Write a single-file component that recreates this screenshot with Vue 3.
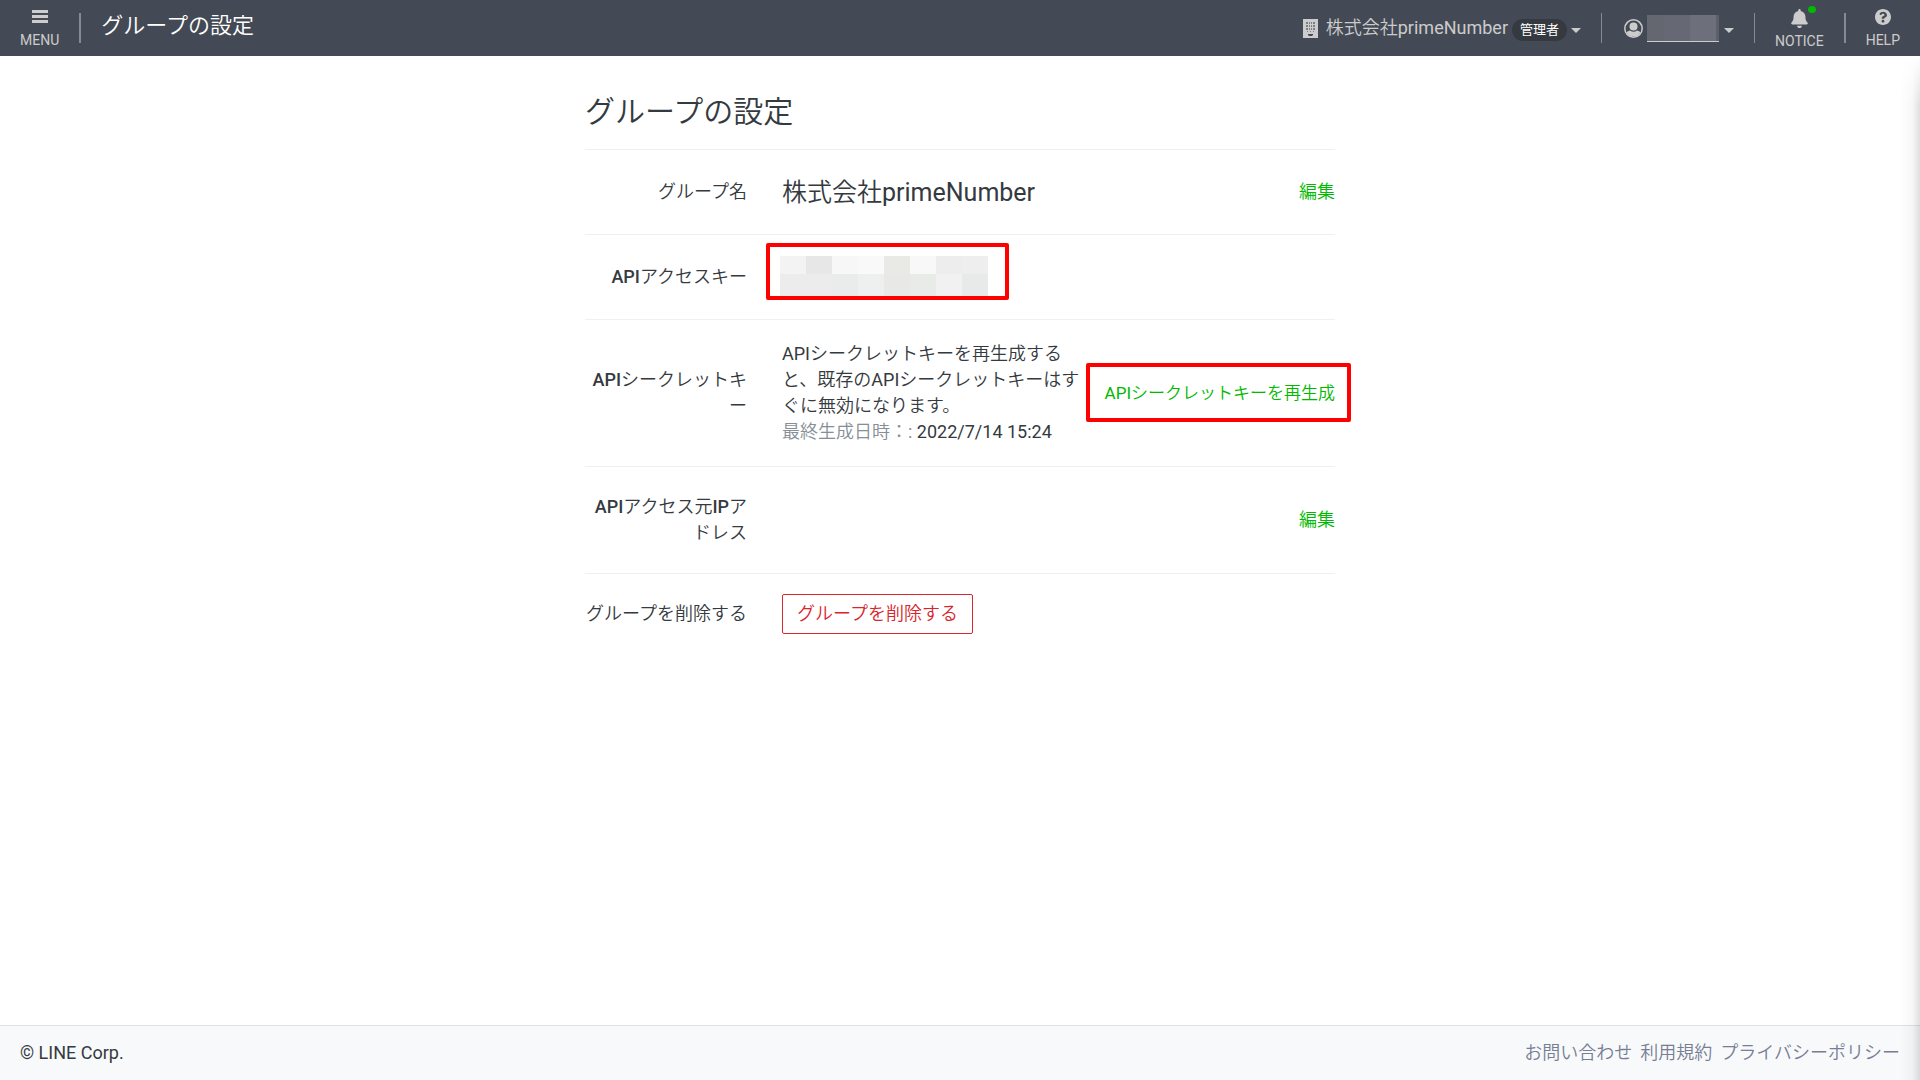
<script setup>
const keyTiles = [
  '#f3f3f3', '#e7e7e7', '#f7f7f7', '#f9f9f9', '#e9e9e6', '#f8f8f8', '#ededed', '#eeeeee',
  '#ececec', '#ebeceb', '#eaeceb', '#eeefef', '#e8e8e6', '#e9ebe9', '#f1f1f1', '#e8eae9',
]
const footerLinks = ['お問い合わせ', '利用規約', 'プライバシーポリシー']
</script>

<template>
  <div class="page" lang="ja">
    <header class="topbar">
      <button type="button" class="stack">
        <svg class="stack-icon" viewBox="0 0 16 16" width="16" height="16" aria-hidden="true">
          <path d="M0 1h16v3H0zM0 6h16v3H0zM0 11h16v3H0z" fill="currentColor" />
        </svg>
        <span>MENU</span>
      </button>
      <span class="divider thick"></span>
      <span class="app-title">グループの設定</span>

      <nav class="tools">
        <button type="button" class="picker">
          <svg class="building" viewBox="0 0 15 19" width="15" height="19" aria-hidden="true">
            <path d="M0 0h15v19H0z" fill="currentColor" />
            <path d="M3 3h2v2H3zM6 3h1v2H6zM8 3h1v2H8zM10 3h2v2h-2zM3 6h2v2H3zM6 6h1v2H6zM8 6h1v2H8zM10 6h2v2h-2zM3 9h2v2H3zM6 9h1v2H6zM8 9h1v2H8zM10 9h2v2h-2zM4 12h1v1H4zM7 12h1v1H7zM10 12h1v1h-1z" fill="#444a55" opacity="0.6" />
            <path d="M5 15h5v1l-1 1H6l-1-1z" fill="#444a55" />
          </svg>
          <span class="company">株式会社primeNumber</span>
          <span class="role">管理者</span>
          <span class="caret"></span>
        </button>
        <span class="divider"></span>
        <button type="button" class="picker account" aria-label="アカウント">
          <svg viewBox="0 0 19 19" width="19" height="19" aria-hidden="true">
            <defs>
              <clipPath id="avatar-ring"><circle cx="9.5" cy="9.5" r="8" /></clipPath>
            </defs>
            <circle cx="9.5" cy="9.5" r="8.7" fill="none" stroke="currentColor" stroke-width="1.5" />
            <g clip-path="url(#avatar-ring)" fill="currentColor">
              <circle cx="9.5" cy="7.5" r="4" />
              <path d="M1 19v-4c1-2 3-3 5-3.500c2 1.600 5 1.600 7 0c2 .5 4 1.500 5 3.500v4z" />
            </g>
          </svg>
          <span class="masked-name"></span>
          <span class="caret"></span>
        </button>
        <span class="divider"></span>
        <button type="button" class="stack notice">
          <svg class="stack-icon bell" viewBox="0 0 448 512" width="17" height="19" aria-hidden="true">
            <path fill="currentColor" d="M224 512c35.32 0 63.97-28.65 63.97-64H160.03c0 35.35 28.65 64 63.97 64zm215.39-149.71c-19.32-20.76-55.47-51.99-55.47-154.29 0-77.7-54.48-139.9-127.94-155.16V32c0-17.67-14.32-32-31.98-32s-31.98 14.33-31.98 32v20.84C118.56 68.1 64.08 130.3 64.08 208c0 102.3-36.15 133.53-55.47 154.29-6 6.45-8.66 14.16-8.61 21.71.11 16.4 12.98 32 32.1 32h383.8c19.12 0 32-15.6 32.1-32 .05-7.55-2.61-15.27-8.61-21.71z" />
          </svg>
          <span>NOTICE</span>
          <span class="dot"></span>
        </button>
        <span class="divider thick"></span>
        <button type="button" class="stack">
          <svg class="stack-icon" viewBox="8 8 496 496" width="16" height="16" aria-hidden="true">
            <path fill="currentColor" d="M504 256c0 136.997-111.043 248-248 248S8 392.997 8 256C8 119.083 119.043 8 256 8s248 111.083 248 248zM262.655 90c-54.497 0-89.255 22.957-116.549 63.758-3.536 5.286-2.353 12.415 2.715 16.258l34.699 26.31c5.205 3.947 12.621 3.008 16.665-2.122 17.864-22.658 30.113-35.797 57.303-35.797 20.429 0 45.698 13.148 45.698 32.958 0 14.976-12.363 22.667-32.534 33.976C247.128 238.528 216 254.941 216 296v4c0 6.627 5.373 12 12 12h56c6.627 0 12-5.373 12-12v-1.333c0-28.462 83.186-29.647 83.186-106.667 0-58.002-60.165-102-116.531-102zM256 338c-25.365 0-46 20.635-46 46 0 25.364 20.635 46 46 46s46-20.636 46-46c0-25.365-20.635-46-46-46z" />
          </svg>
          <span>HELP</span>
        </button>
      </nav>
    </header>

    <div class="body">
      <main class="content">
        <h1>グループの設定</h1>
        <dl class="settings">
          <div class="row">
            <dt>グループ名</dt>
            <dd><span class="group-name">株式会社primeNumber</span><a href="#">編集</a></dd>
          </div>
          <div class="row">
            <dt>APIアクセスキー</dt>
            <dd>
              <span class="key-mark">
                <span class="mosaic">
                  <span v-for="(color, i) in keyTiles" :key="i" :style="{ background: color }"></span>
                </span>
              </span>
            </dd>
          </div>
          <div class="row">
            <dt>APIシークレットキー</dt>
            <dd>
              <div class="secret">
                <p>APIシークレットキーを再生成すると、既存のAPIシークレットキーはすぐに無効になります。</p>
                <p><span class="muted">最終生成日時：:</span> 2022/7/14 15:24</p>
              </div>
              <a href="#" class="regenerate">APIシークレットキーを再生成</a>
            </dd>
          </div>
          <div class="row tall">
            <dt>APIアクセス元IPアドレス</dt>
            <dd><a href="#">編集</a></dd>
          </div>
          <div class="row last">
            <dt>グループを削除する</dt>
            <dd><button type="button" class="delete">グループを削除する</button></dd>
          </div>
        </dl>
      </main>
      <footer class="footer">
        <span>© LINE Corp.</span>
        <nav class="footer-links">
          <a v-for="link in footerLinks" :key="link" href="#">{{ link }}</a>
        </nav>
      </footer>
      <div class="edge-shadow"></div>
    </div>
  </div>
</template>

<style>
body {
  margin: 0;
  background: #fff;
}
</style>

<style scoped>
.page {
  display: flex;
  flex-direction: column;
  min-height: 100vh;
  color: #343a40;
  font-family: Roboto, "Noto Sans CJK JP DemiLight", "Noto Sans CJK JP", sans-serif;
  font-size: 18px;
  font-weight: 400;
  line-height: 26px;
}
button {
  padding: 0;
  border: 0;
  background: none;
  color: inherit;
  font: inherit;
  cursor: pointer;
}
a {
  color: #00b900;
  text-decoration: none;
  white-space: nowrap;
}
h1, dl, dd, p {
  margin: 0;
}

.topbar {
  display: flex;
  align-items: center;
  height: 56px;
  padding: 0 20px;
  box-sizing: border-box;
  background: #444a55;
  color: #ccc;
}
.stack {
  display: flex;
  flex-direction: column;
  align-items: center;
  gap: 7px;
  position: relative;
  padding-top: 1px;
  font-size: 14px;
  line-height: 16px;
}
.stack-icon {
  display: block;
}
.bell {
  margin-bottom: -2px;
}
.divider {
  width: 1px;
  height: 30px;
  margin: 0 20px;
  background: #868b93;
}
.divider.thick {
  width: 2px;
}
.app-title {
  margin-bottom: 4px;
  color: #fff;
  font-size: 22px;
}
.tools {
  display: flex;
  align-items: center;
  margin-left: auto;
}
.picker {
  display: flex;
  align-items: center;
}
.account {
  padding-left: 2px;
}
.building {
  margin-right: 8px;
}
.role {
  margin: 4px 4px 0;
  padding: 0 8px;
  border-radius: 11px;
  background: #343a40;
  color: #fff;
  font-family: Roboto, "Noto Sans CJK JP", sans-serif;
  font-size: 13px;
  line-height: 22px;
}
.caret {
  margin-top: 4px;
  border: 5px solid transparent;
  border-top-color: currentColor;
  border-bottom: 0;
}
.masked-name {
  width: 72px;
  height: 26px;
  margin: 0 5px 0 4px;
  border-bottom: 1px solid #ccc;
  background: linear-gradient(90deg, #64676f 24%, #666973 24% 60%, #6d6f7b 60% 96%, #5c606a 96%);
}
.dot {
  position: absolute;
  top: -2px;
  right: 8px;
  width: 8px;
  height: 7px;
  border-radius: 50%;
  background: #00b900;
}

.body {
  display: flex;
  flex: 1;
  flex-direction: column;
  position: relative;
}
.content {
  flex: 1;
  width: 100%;
  max-width: 750px;
  margin: 0 auto;
}
h1 {
  padding: 36px 0 17px;
  font-size: 30px;
  font-weight: 400;
  line-height: 40px;
}
.row {
  display: flex;
  align-items: center;
  gap: 35px;
  min-height: 85px;
  padding: 21px 0;
  box-sizing: border-box;
  border-top: 1px solid #f0f0f1;
}
.row.tall {
  padding: 27px 0;
}
.row.last {
  min-height: 0;
  padding: 20px 0;
}
dt {
  width: 162px;
  line-break: anywhere;
  text-align: right;
  font-weight: 500;
}
dd {
  display: flex;
  flex: 1;
  align-items: center;
  position: relative;
}
dd > a {
  margin-left: auto;
}
.group-name {
  padding-top: 2px;
  font-size: 25px;
  line-height: 32px;
}
.secret {
  width: 300px;
}
.muted {
  color: #868e96;
}
.key-mark,
.regenerate::after {
  position: absolute;
  box-sizing: border-box;
  border: 4px solid #f00;
  border-radius: 2px;
}
.key-mark {
  top: -34px;
  left: -16px;
  width: 243px;
  height: 57px;
  padding: 9px 10px 0;
}
.mosaic {
  display: grid;
  grid-template-columns: repeat(8, 26px);
  grid-template-rows: 18px 22px;
}
.regenerate {
  position: relative;
  font-size: 17px;
}
.regenerate::after {
  content: "";
  top: -17px;
  right: -16px;
  width: 265px;
  height: 59px;
}
.delete {
  padding: 0 14px;
  border: 1px solid #d9252c;
  border-radius: 2px;
  color: #d9252c;
  line-height: 38px;
}

.footer {
  display: flex;
  justify-content: space-between;
  align-items: center;
  height: 54px;
  padding: 0 20px;
  border-top: 1px solid #dee2e2;
  background: #f7f9fb;
}
.footer-links {
  display: flex;
  gap: 8px;
}
.footer-links a {
  color: #777e94;
}
.edge-shadow {
  position: absolute;
  top: 0;
  right: 0;
  bottom: 0;
  width: 20px;
  background: linear-gradient(90deg, rgba(0, 0, 0, 0), rgba(0, 0, 0, 0.03) 60%, rgba(0, 0, 0, 0.12));
  mask-image: linear-gradient(transparent, #000 50px);
  pointer-events: none;
}
</style>
